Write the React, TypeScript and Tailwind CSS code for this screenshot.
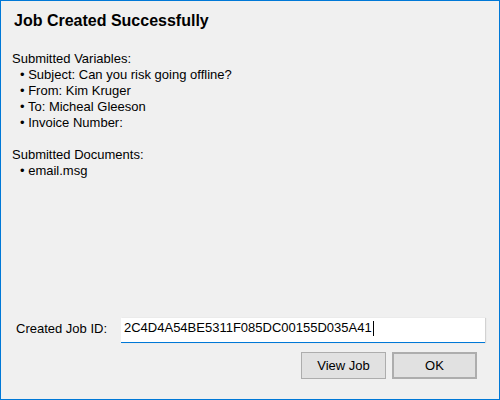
import React from 'react';

const variables = [
  'Subject: Can you risk going offline?',
  'From: Kim Kruger',
  'To: Micheal Gleeson',
  'Invoice Number:',
];

const documents = ['email.msg'];

const Bullet: React.FC<{ text: string }> = ({ text }) => (
  <div className="pl-2 whitespace-pre">{'• ' + text}</div>
);

const App: React.FC = () => {
  return (
    <div
      className="w-[500px] h-[400px] border border-[#0078d7] bg-[#f0f0f0] flex flex-col text-black"
      style={{ fontFamily: '"Liberation Sans", Arial, sans-serif' }}
    >
      <div className="pt-[10px] pl-[13px] text-[16px] leading-[20px] font-bold">Job Created Successfully</div>

      <div className="mt-5 pl-[11px] text-[13px] leading-[16px]">
        <div>Submitted Variables:</div>
        {variables.map(v => (
          <Bullet key={v} text={v} />
        ))}
        <div className="h-4" />
        <div>Submitted Documents:</div>
        {documents.map(d => (
          <Bullet key={d} text={d} />
        ))}
      </div>

      <div className="flex-1" />

      <div className="flex items-start pl-[15px] text-[13px] leading-[16px]">
        <div className="mt-[3px] w-[105px]">Created Job ID:</div>
        <div className="w-[364px] h-[25px] bg-white border-b border-[#0078d7] shadow-[1px_0_1px_rgba(0,0,0,0.12)] pl-[3px] pt-[2px] flex items-start">
          <span>2C4D4A54BE5311F085DC00155D035A41</span>
          <span className="inline-block w-px h-[15px] bg-black ml-px mt-[1px]" />
        </div>
      </div>

      <div className="flex justify-end gap-[6px] mt-[9px] pr-[22px] pb-5 text-[13px]">
        <button className="w-[85px] h-[27px] border border-[#adadad] bg-[#e1e1e1]">View Job</button>
        <button className="w-[85px] h-[27px] border-2 border-[#adadad] bg-[#e1e1e1]">OK</button>
      </div>
    </div>
  );
};

export default App;
